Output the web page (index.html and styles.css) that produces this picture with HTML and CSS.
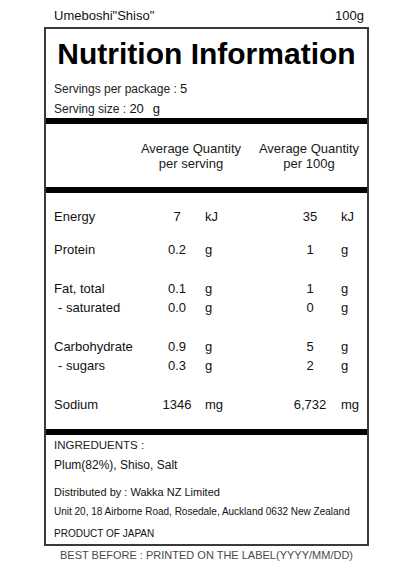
FILE: index.html
```html
<!DOCTYPE html>
<html lang="en">
<head>
<meta charset="utf-8">
<title>Nutrition Information</title>
<link rel="stylesheet" href="styles.css">
</head>
<body>
<div class="label">
  <div class="top-line">
    <span>Umeboshi"Shiso"</span>
    <span>100g</span>
  </div>
  <div class="panel">
    <h1 class="title">Nutrition Information</h1>
    <div class="servings">
      <div class="serv-row first">Servings per package : <span class="serv-val">5</span></div>
      <div class="serv-row second">Serving size : <span class="serv-val">20</span><span class="serv-val unit-g">g</span></div>
    </div>
    <div class="col-head">
      <div class="spacer"></div>
      <div class="head-cell">Average Quantity<br>per serving</div>
      <div class="head-cell">Average Quantity<br>per 100g</div>
    </div>
    <div class="nutrients">
      <div class="row">
        <span class="name">Energy</span><span class="val">7</span><span class="unit">kJ</span><span class="val">35</span><span class="unit u2">kJ</span>
      </div>
      <div class="row gap-s">
        <span class="name">Protein</span><span class="val">0.2</span><span class="unit">g</span><span class="val">1</span><span class="unit u2">g</span>
      </div>
      <div class="row gap-l">
        <span class="name">Fat, total</span><span class="val">0.1</span><span class="unit">g</span><span class="val">1</span><span class="unit u2">g</span>
      </div>
      <div class="row">
        <span class="name sub">- saturated</span><span class="val">0.0</span><span class="unit">g</span><span class="val">0</span><span class="unit u2">g</span>
      </div>
      <div class="row gap-l">
        <span class="name">Carbohydrate</span><span class="val">0.9</span><span class="unit">g</span><span class="val">5</span><span class="unit u2">g</span>
      </div>
      <div class="row">
        <span class="name sub">- sugars</span><span class="val">0.3</span><span class="unit">g</span><span class="val">2</span><span class="unit u2">g</span>
      </div>
      <div class="row gap-l">
        <span class="name">Sodium</span><span class="val">1346</span><span class="unit">mg</span><span class="val">6,732</span><span class="unit u2">mg</span>
      </div>
    </div>
    <div class="info">
      <div class="ing-head">INGREDUENTS :</div>
      <div class="ing-list">Plum(82%), Shiso, Salt</div>
      <div class="dist">Distributed by : Wakka NZ Limited</div>
      <div class="addr">Unit 20, 18 Airborne Road, Rosedale, Auckland 0632 New Zealand</div>
      <div class="origin">PRODUCT OF JAPAN</div>
    </div>
  </div>
  <div class="best-before">BEST BEFORE : PRINTED ON THE LABEL(YYYY/MM/DD)</div>
</div>
</body>
</html>
```
FILE: styles.css
```css
* {
  box-sizing: border-box;
}

html, body {
  margin: 0;
  padding: 0;
  background: #ffffff;
}

body {
  font-family: "Liberation Sans", Arial, sans-serif;
  color: #111111;
}

.label {
  width: 325px;
  margin-left: 44px;
}

.top-line {
  display: flex;
  justify-content: space-between;
  padding: 8px 5px 0 10px;
  margin-bottom: 3px;
  font-size: 13px;
  line-height: 16px;
  color: #111111;
}

.panel {
  border: 2px solid #3a3a3a;
}

.title {
  margin: 0;
  padding-top: 10px;
  font-size: 30px;
  line-height: 30px;
  font-weight: bold;
  text-align: center;
  color: #000000;
}

.servings {
  margin-top: 10px;
  padding-left: 8px;
  font-size: 12px;
  color: #222222;
}

.serv-row.first {
  line-height: 20px;
  height: 20px;
}

.serv-row.second {
  line-height: 19px;
  height: 19px;
}

.serv-val {
  font-size: 13px;
  color: #111111;
}

.unit-g {
  margin-left: 9px;
}

.col-head {
  display: grid;
  grid-template-columns: 82px 110px 110px;
  column-gap: 8px;
  border-top: 6px solid #000000;
  border-bottom: 6px solid #000000;
  padding: 17px 0 16px;
  font-size: 13px;
  line-height: 15px;
}

.head-cell {
  text-align: center;
  color: #1a1a1a;
}

.nutrients {
  padding: 14px 0 15px;
  font-size: 13px;
  line-height: 19px;
}

.row {
  display: grid;
  grid-template-columns: 111px 40px 93px 40px 37px;
  height: 19px;
}

.row.gap-s {
  margin-top: 14px;
}

.row.gap-l {
  margin-top: 20px;
}

.name {
  padding-left: 8px;
}

.name.sub {
  padding-left: 12px;
}

.val {
  text-align: center;
  white-space: nowrap;
}

.unit {
  padding-left: 8px;
}

.unit.u2 {
  padding-left: 11px;
}

.info {
  border-top: 6px solid #000000;
  padding-left: 8px;
}

.ing-head {
  font-size: 11.5px;
  line-height: 20px;
  color: #222222;
}

.ing-list {
  font-size: 12px;
  line-height: 20px;
}

.dist {
  margin-top: 7px;
  font-size: 11px;
  line-height: 20px;
}

.addr {
  font-size: 10px;
  line-height: 20px;
}

.origin {
  margin-top: 2px;
  font-size: 10px;
  line-height: 20px;
}

.best-before {
  margin-top: 2px;
  text-align: center;
  font-size: 11px;
  line-height: 14px;
  color: #4a4a4a;
}
```
